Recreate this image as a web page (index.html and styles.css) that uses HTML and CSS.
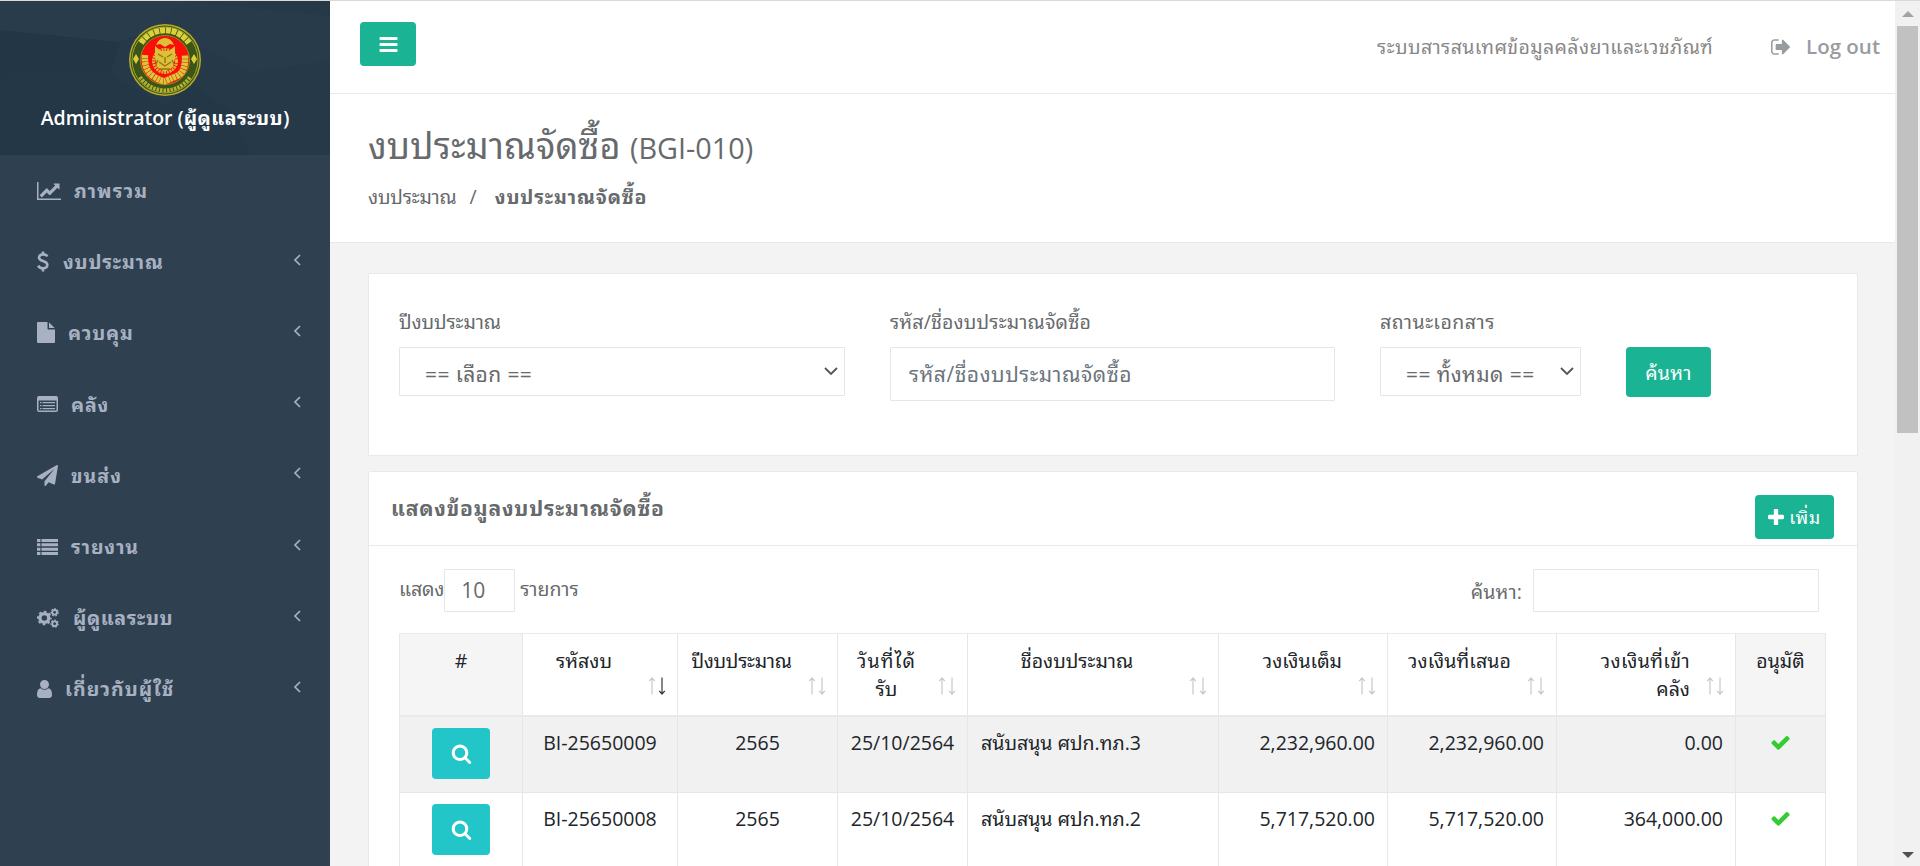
FILE: index.html
```html
<!DOCTYPE html>
<html lang="th">
<head>
<meta charset="utf-8">
<title>งบประมาณจัดซื้อ</title>
<link rel="stylesheet" href="styles.css">
</head>
<body>
<svg class="defs" width="0" height="0">
  <symbol id="i-bars" viewBox="0 0 1792 1792"><path d="M1664 1344v128q0 26-19 45t-45 19h-1408q-26 0-45-19t-19-45v-128q0-26 19-45t45-19h1408q26 0 45 19t19 45zm0-512v128q0 26-19 45t-45 19h-1408q-26 0-45-19t-19-45v-128q0-26 19-45t45-19h1408q26 0 45 19t19 45zm0-512v128q0 26-19 45t-45 19h-1408q-26 0-45-19t-19-45v-128q0-26 19-45t45-19h1408q26 0 45 19t19 45z"/></symbol>
  <symbol id="i-search" viewBox="0 0 1792 1792"><path d="M1216 832q0-185-131.5-316.5t-316.5-131.5-316.5 131.5-131.5 316.5 131.5 316.5 316.5 131.5 316.5-131.5 131.5-316.5zm512 832q0 52-38 90t-90 38q-54 0-90-38l-343-342q-179 124-399 124-143 0-273.5-55.5t-225-150-150-225-55.5-273.5 55.5-273.5 150-225 225-150 273.5-55.5 273.5 55.5 225 150 150 225 55.5 273.5q0 220-124 399l343 343q37 37 37 90z"/></symbol>
  <symbol id="i-check" viewBox="0 0 1792 1792"><path d="M1671 566q0 40-28 68l-724 724-136 136q-28 28-68 28t-68-28l-136-136-362-362q-28-28-28-68t28-68l136-136q28-28 68-28t68 28l294 295 656-657q28-28 68-28t68 28l136 136q28 28 28 68z"/></symbol>
  <symbol id="i-sort" viewBox="0 0 18 18"><path class="sort-up" d="M4 17.500V1M1.200 4.200L4 1l2.800 3.200"/><path class="sort-down" d="M14 .5V17M11.200 13.800L14 17l2.800-3.200"/></symbol>
  <symbol id="i-angle" viewBox="0 0 8 12"><path d="M7 1L2 6l5 5" fill="none" stroke="currentColor" stroke-width="1.700"/></symbol>
</svg>
<div class="topline"></div>
<div class="app">
  <aside class="sidebar">
    <div class="profile">
      <svg class="facets" viewBox="0 0 330 154" preserveAspectRatio="none">
        <rect width="330" height="154" fill="#263949"/>
        <path d="M0 29L120 41L110 73L17 69L0 85Z" fill="#233646"/>
        <path d="M0 0H185L160 24L120 41L0 29Z" fill="#283c4b"/>
        <path d="M17 69L110 73L165 105L60 154H0V85Z" fill="#243747"/>
        <path d="M190 80L230 110L250 154H60L165 105Z" fill="#243747"/>
        <path d="M330 15V60L250 71L160 24L185 0Z" fill="#273b4a"/>
      </svg>
      <svg class="emblem" viewBox="0 0 72 72">
        <circle cx="36" cy="36" r="36" fill="#b5ad27"/><circle cx="36" cy="36" r="34.500" fill="#3b5518"/>
        <circle cx="36" cy="36" r="33" fill="none" stroke="#a8a329" stroke-width="1"/>
        <path d="M12 19A29 29 0 0 1 60 19" fill="none" stroke="#ddd13a" stroke-width="6" stroke-dasharray="5 .8"/>
        <path d="M11 53A30 30 0 0 0 61 53" fill="none" stroke="#b8b030" stroke-width="4" stroke-dasharray="2.500 1"/>
        <circle cx="36" cy="36" r="24.500" fill="#fb0d08" stroke="#948f22" stroke-width="1"/>
        <path d="M7 30l3 5-3 5-3-5zM65 30l3 5-3 5-3-5z" fill="#d9ce3a"/>
        <path d="M16 31Q15 46 24 52T36 57T48 52T56 31" fill="none" stroke="#d6c83a" stroke-width="6.500" stroke-dasharray="3 .5"/>
        <path d="M27 21Q30 14 36 14T45 21L41 20L36 23L31 20Z" fill="#dcc038"/>
        <circle cx="36" cy="37" r="11.500" fill="none" stroke="#d8b834" stroke-width="3" stroke-dasharray="2 .8"/>
        <path d="M26 22L32 27H40L46 22L46 34L44 43L36 48L28 43L26 34Z" fill="#dcc038"/>
        <path d="M29 30l5 3m9-3l-5 3M30 38l6 4 6-4M36 33v6M31 45h10M29 36l-2 4M43 36l2 4" fill="none" stroke="#94701a" stroke-width="1.400"/>
      </svg>
      <div class="who"><span>Administrator (<span class="t-admin">ผู้ดูแลระบบ</span>)</span></div>
    </div>
    <nav class="menu">
      <a class="item"><svg class="ic ic-chart" viewBox="0 128 2048 1536"><path d="M2048 1536v128h-2048v-1536h128v1408h1920zm-128-1248v435q0 21-19.500 29.500t-35.500-7.500l-121-121-633 633q-10 10-23 10t-23-10l-233-233-416 416-192-192 585-585q10-10 23-10t23 10l233 233 464-464-121-121q-16-16-7.500-35.500t29.500-19.500h435q14 0 23 9t9 23z"/></svg><span class="t-m1">ภาพรวม</span></a>
      <a class="item"><svg class="ic ic-dollar" viewBox="0 0 12 21"><path d="M10.300 5.600C9.600 4 8 3.400 6 3.400c-2.300 0-4 1.100-4 3 0 4.500 8.300 2.600 8.300 7.400 0 2.200-1.800 3.500-4.300 3.500-2.200 0-4-.9-4.800-2.700M6 .5v3M6 17v3.500" fill="none" stroke="currentColor" stroke-width="2.600"/></svg><span class="t-m2">งบประมาณ</span><svg class="angle"><use href="#i-angle"/></svg></a>
      <a class="item"><svg class="ic ic-file" viewBox="128 0 1536 1792"><path d="M1152 512v-472q22 14 36 28l408 408q14 14 28 36h-472zm-128 32q0 40 28 68t68 28h544v1056q0 40-28 68t-68 28h-1344q-40 0-68-28t-28-68v-1600q0-40 28-68t68-28h800v544z"/></svg><span class="t-m3">ควบคุม</span><svg class="angle"><use href="#i-angle"/></svg></a>
      <a class="item"><svg class="ic ic-listalt" viewBox="0 0 21 16"><path fill-rule="evenodd" d="M2 0H19Q21 0 21 2V14Q21 16 19 16H2Q0 16 0 14V2Q0 0 2 0ZM1.500 4.500V14Q1.500 14.600 2 14.600H19Q19.500 14.600 19.500 14V4.500Z"/><path d="M3 6h1.500v1.200H3zm2.500 0H18v1.200H5.500zM3 9h1.500v1.200H3zm2.500 0H18v1.200H5.500zM3 12h1.500v1.200H3zm2.500 0H18v1.200H5.500z"/></svg><span class="t-m4">คลัง</span><svg class="angle"><use href="#i-angle"/></svg></a>
      <a class="item"><svg class="ic ic-plane" viewBox="0 0 1792 1792"><path d="M1764 11q33 24 27 64l-256 1536q-5 29-32 45-14 8-31 8-11 0-24-5l-453-185-242 295q-18 23-49 23-13 0-22-4-19-7-30.500-23.500t-11.500-36.500v-349l864-1059-1069 925-395-162q-37-14-40-55-2-40 32-59l1664-960q15-9 32-9 20 0 36 11z"/></svg><span class="t-m5">ขนส่ง</span><svg class="angle"><use href="#i-angle"/></svg></a>
      <a class="item"><svg class="ic ic-list" viewBox="0 0 21 16"><path d="M0 0h3.400v3H0zm4.500 0H21v3H4.500zM0 4.300h3.400v3H0zm4.500 0H21v3H4.500zM0 8.700h3.400v3H0zm4.500 0H21v3H4.500zM0 13h3.400v3H0zm4.500 0H21v3H4.500z"/></svg><span class="t-m6">รายงาน</span><svg class="angle"><use href="#i-angle"/></svg></a>
      <a class="item"><svg class="ic ic-cogs" viewBox="0 0 22.500 20" fill="none" stroke="currentColor"><circle cx="7.500" cy="10" r="4.500" stroke-width="3.400"/><circle cx="7.500" cy="10" r="6.600" stroke-width="1.800" stroke-dasharray="2.700 2.480" stroke-dashoffset="1.300"/><circle cx="18" cy="4.200" r="2.400" stroke-width="1.900"/><circle cx="18" cy="4.200" r="3.700" stroke-width="1.200" stroke-dasharray="1.700 1.620"/><circle cx="18" cy="15.800" r="2.400" stroke-width="1.900"/><circle cx="18" cy="15.800" r="3.700" stroke-width="1.200" stroke-dasharray="1.700 1.620"/></svg><span class="t-m7">ผู้ดูแลระบบ</span><svg class="angle"><use href="#i-angle"/></svg></a>
      <a class="item"><svg class="ic ic-user" viewBox="256 128 1280 1536"><path d="M1536 1399q0 109-62.500 187t-150.500 78h-854q-88 0-150.500-78t-62.500-187q0-85 8.500-160.500t31.500-152 58.500-131 94-89 134.500-34.500q131 128 313 128t313-128q76 0 134.500 34.500t94 89 58.500 131 31.500 152 8.500 160.500zm-256-887q0 159-112.500 271.500t-271.500 112.500-271.500-112.500-112.500-271.500 112.500-271.500 271.500-112.500 271.500 112.500 112.500 271.500z"/></svg><span class="t-m8">เกี่ยวกับผู้ใช้</span><svg class="angle"><use href="#i-angle"/></svg></a>
    </nav>
  </aside>
  <main class="page">
    <header class="topbar">
      <button class="btn toggle"><svg><use href="#i-bars"/></svg></button>
      <div class="top-right">
        <span class="t-system">ระบบสารสนเทศข้อมูลคลังยาและเวชภัณฑ์</span>
        <a class="logout"><svg viewBox="64 256 1568 1280"><path d="M704 1440q0 4 1 20t.5 26.500-3 23.500-10 19.500-20.500 6.500h-320q-119 0-203.500-84.500t-84.500-203.500v-704q0-119 84.500-203.500t203.500-84.500h320q13 0 22.500 9.500t9.500 22.500q0 4 1 20t.5 26.500-3 23.500-10 19.500-20.500 6.500h-320q-66 0-113 47t-47 113v704q0 66 47 113t113 47h312l11.500 1 11.500 3 8 5.500 7 9 2 13.500zm928-544q0 26-19 45l-544 544q-19 19-45 19t-45-19-19-45v-288h-448q-26 0-45-19t-19-45v-384q0-26 19-45t45-19h448v-288q0-26 19-45t45-19 45 19l544 544q19 19 19 45z"/></svg><span>Log out</span></a>
      </div>
    </header>
    <section class="heading">
      <h2><span class="t-title">งบประมาณจัดซื้อ</span> <small>(BGI-010)</small></h2>
      <div class="crumbs"><span class="t-c1">งบประมาณ</span><span class="slash">/</span><strong class="t-c2">งบประมาณจัดซื้อ</strong></div>
    </section>
    <div class="content">
      <section class="card filter">
        <div class="field f-year"><label><span class="t-l1">ปีงบประมาณ</span></label><div class="select"><span class="t-s1">== เลือก ==</span><svg viewBox="0 0 14 9"><path d="M1 1l6 6 6-6"/></svg></div></div>
        <div class="field f-name"><label><span class="t-l2">รหัส/ชื่องบประมาณจัดซื้อ</span></label><div class="input"><span class="t-s2">รหัส/ชื่องบประมาณจัดซื้อ</span></div></div>
        <div class="field f-status"><label><span class="t-l3">สถานะเอกสาร</span></label><div class="select"><span class="t-s3">== ทั้งหมด ==</span><svg viewBox="0 0 14 9"><path d="M1 1l6 6 6-6"/></svg></div></div>
        <button class="btn find"><span class="t-find">ค้นหา</span></button>
      </section>
      <section class="card list">
        <div class="list-head"><h5><span class="t-list">แสดงข้อมูลงบประมาณจัดซื้อ</span></h5><button class="btn add"><svg viewBox="192 128 1408 1408"><path d="M1600 736v192q0 40-28 68t-68 28h-416v416q0 40-28 68t-68 28h-192q-40 0-68-28t-28-68v-416h-416q-40 0-68-28t-28-68v-192q0-40 28-68t68-28h416v-416q0-40 28-68t68-28h192q40 0 68 28t28 68v416h416q40 0 68 28t28 68z"/></svg><span class="t-add">เพิ่ม</span></button></div>
        <div class="tools">
          <div class="length"><span class="t-show">แสดง</span><div class="num">10</div><span class="t-items">รายการ</span></div>
          <div class="search"><span class="t-search">ค้นหา:</span><div class="box"></div></div>
        </div>
        <table>
          <colgroup><col class="c1"><col class="c2"><col class="c3"><col class="c4"><col class="c5"><col class="c6"><col class="c7"><col class="c8"><col class="c9"></colgroup>
          <thead><tr>
            <th class="plain">#</th>
            <th><span class="t-h2">รหัสงบ</span><svg class="sort desc"><use href="#i-sort"/></svg></th>
            <th><span class="t-h3">ปีงบประมาณ</span><svg class="sort"><use href="#i-sort"/></svg></th>
            <th><span class="t-h4">วันที่ได้</span><br><span class="t-h4b">รับ</span><svg class="sort"><use href="#i-sort"/></svg></th>
            <th><span class="t-h5">ชื่องบประมาณ</span><svg class="sort"><use href="#i-sort"/></svg></th>
            <th class="right"><span class="t-h6">วงเงินเต็ม</span><svg class="sort"><use href="#i-sort"/></svg></th>
            <th class="right"><span class="t-h7">วงเงินที่เสนอ</span><svg class="sort"><use href="#i-sort"/></svg></th>
            <th class="right"><span class="t-h8">วงเงินที่เข้า</span><br><span class="t-h8b">คลัง</span><svg class="sort"><use href="#i-sort"/></svg></th>
            <th class="plain"><span class="t-h9">อนุมัติ</span></th>
          </tr></thead>
          <tbody>
            <tr class="odd"><td><button class="btn view"><svg><use href="#i-search"/></svg></button></td><td>BI-25650009</td><td>2565</td><td>25/10/2564</td><td class="left"><span class="t-r">สนับสนุน ศปก.ทภ.3</span></td><td class="right">2,232,960.00</td><td class="right">2,232,960.00</td><td class="right">0.00</td><td><svg class="ok"><use href="#i-check"/></svg></td></tr>
            <tr><td><button class="btn view"><svg><use href="#i-search"/></svg></button></td><td>BI-25650008</td><td>2565</td><td>25/10/2564</td><td class="left"><span class="t-r">สนับสนุน ศปก.ทภ.2</span></td><td class="right">5,717,520.00</td><td class="right">5,717,520.00</td><td class="right">364,000.00</td><td><svg class="ok"><use href="#i-check"/></svg></td></tr>
          </tbody>
        </table>
      </section>
    </div>
  </main>
  <div class="scrollbar"><svg class="up" viewBox="0 0 12 6"><path d="M0 6L6 0l6 6z"/></svg><div class="thumb"></div><svg class="down" viewBox="0 0 12 6"><path d="M0 0h12L6 6z"/></svg></div>
</div>
</body>
</html>
```
FILE: styles.css
```css
* { box-sizing: border-box; }
html, body { margin: 0; height: 866px; overflow: hidden; }
body { font: 19.5px/29px "Open Sans", Tahoma, "Noto Sans Thai Looped", Loma, Waree, "Noto Sans Thai", sans-serif; color: #676a6c; background: #f3f3f4; }
span { white-space: nowrap; }
svg { fill: currentColor; display: block; flex: none; }
.defs { position: absolute; }
.topline { height: 1px; background: #d9d9d9; }
.app { display: grid; grid-template-columns: 330px 1565px 25px; height: 865px; overflow: hidden; }

.sidebar { background: #2f4050; color: #a7b1c2; font-weight: 600; }
.profile { height: 154px; position: relative; display: flex; flex-direction: column; align-items: center; padding-top: 23px; overflow: hidden; }
.facets { position: absolute; left: 0; top: 0; width: 330px; height: 154px; }
.emblem { position: relative; width: 72px; height: 72px; }
.who { position: relative; color: #fff; margin-top: 7px; }
.item { display: flex; align-items: center; height: 71.2px; padding: 0 29px 0 37px; font-weight: 700; letter-spacing: .8px; }
.ic-chart { width: 24px; height: 18px; margin-right: 13px; }
.ic-dollar { width: 12px; height: 21px; margin-right: 14px; }
.ic-file { width: 18px; height: 21px; margin-right: 13px; }
.ic-listalt { width: 21px; height: 16px; margin-right: 13px; }
.ic-plane { width: 21px; height: 21px; margin-right: 13px; }
.ic-list { width: 21px; height: 16px; margin-right: 13px; }
.ic-cogs { width: 22px; height: 20px; margin-right: 14px; fill: none; }
.ic-user { width: 15px; height: 18px; margin-right: 13px; }
.angle { width: 8px; height: 12px; margin: 0 0 4px auto; }

/* Thai runs: tracking per label */
.t-admin { font-weight: 700; letter-spacing: .5px; }
.t-m1, .t-m5, .t-m8 { letter-spacing: 1px; }
.t-m7 { letter-spacing: .6px; }
.t-system { letter-spacing: .38px; }
.t-title { letter-spacing: .18px; }
.t-c1 { letter-spacing: -.2px; }
.t-c2 { letter-spacing: .85px; }
.t-l1 { letter-spacing: -.1px; }
.t-l2 { letter-spacing: .15px; }
.t-l3 { letter-spacing: .5px; }
.t-s1, .t-s3 { letter-spacing: .4px; }
.t-s2 { letter-spacing: .53px; }
.t-find { letter-spacing: .2px; }
.t-show { letter-spacing: -.2px; }
.t-search { letter-spacing: .1px; }
.t-h3 { letter-spacing: -.3px; }
.t-h4 { letter-spacing: 1.1px; }
.t-h7 { letter-spacing: .1px; }
.t-h8 { letter-spacing: .35px; }
.t-list { letter-spacing: .8px; }

.page { background: #f3f3f4; overflow: hidden; }
.btn { border: 0; border-radius: 4px; background: #1ab394; color: #fff; font: inherit; padding: 0; display: flex; align-items: center; justify-content: center; flex: none; }
.topbar { height: 93px; background: #fff; border-bottom: 1px solid #e7eaec; display: flex; justify-content: space-between; padding: 21px 15px 0 30px; }
.toggle { width: 56px; height: 44px; }
.toggle svg { width: 21px; height: 21px; }
.top-right { display: flex; align-items: flex-start; color: #888888; padding-top: 10px; }
.logout { display: flex; align-items: center; color: #999c9e; font-size: 20.5px; font-weight: 600; margin-left: 58px; }
.logout svg { width: 19px; height: 16px; margin-right: 16px; }
.heading { height: 149px; background: #fff; border-bottom: 1px solid #e7eaec; padding: 30px 38px 0; }
h2 { margin: 0; font-size: 36px; line-height: 43px; height: 43px; font-weight: 400; }
h2 small { font-size: 28.8px; line-height: 1; font-weight: 400; }
.crumbs { margin-top: 15px; display: flex; }
.slash { margin: 0 18px 0 13px; }
.content { padding: 30px 37px 0 38px; }
.card { background: #fff; border: 1px solid #e7eaec; }
.filter { height: 183px; display: flex; padding: 33px 30px 0; }
.field label { display: block; height: 40px; }
.f-year { width: 446px; margin-right: 45px; }
.f-name { width: 445px; margin-right: 45px; }
.f-status { width: 201px; margin-right: 45px; }
.select, .input, .num, .box { border: 1px solid #e5e6e7; border-radius: 1px; background: #fff; }
.select { height: 49px; font-size: 21px; display: flex; align-items: center; justify-content: space-between; padding: 5px 6px 0 25px; }
.select svg { width: 14px; height: 9px; fill: none; stroke: #555; stroke-width: 1.8; margin-bottom: 5px; }
.input { height: 54px; font-size: 21px; padding: 12px 18px 0; color: #6c757d; }
.find { width: 85px; height: 50px; margin-top: 40px; }
.list { margin-top: 15px; height: 500px; border-radius: 3px 3px 0 0; }
.list-head { height: 74px; border-bottom: 1px solid #e7eaec; display: flex; justify-content: space-between; padding: 23px 23px 0 22px; }
h5 { margin: -1px 0 0; font-size: 21px; font-weight: 700; }
.add { width: 79px; height: 44px; font-size: 18px; }
.add svg { width: 16px; height: 16px; margin-right: 5px; }
.t-add { letter-spacing: .5px; }
.tools { display: flex; justify-content: space-between; padding: 23px 38px 0 30px; height: 87px; }
.length { display: flex; }
.length span { padding-top: 5px; }
.num { width: 71px; height: 43px; font-size: 21px; padding: 6px 0 0 16px; margin-right: 5px; }
.search { display: flex; }
.search span { padding-top: 8px; }
.box { width: 286px; height: 43px; margin-left: 11px; }

table { margin-left: 30px; width: 1427px; table-layout: fixed; border-collapse: separate; border-spacing: 0; border: 1px solid #e7eaec; border-right: 0; color: #212529; }
.c1 { width: 123px; } .c2 { width: 155px; } .c3 { width: 160px; } .c4 { width: 130px; } .c5 { width: 251px; } .c6 { width: 169px; } .c7 { width: 169px; } .c8 { width: 179px; } .c9 { width: 90px; }
th, td { border-right: 1px solid #e7e7e7; padding: 0; vertical-align: top; text-align: center; font-weight: 400; }
th { position: relative; height: 83px; padding: 13px 32px 0 0; line-height: 28px; border-bottom: 2px solid #e7eaec; }
.plain { background: #f5f5f6; padding-right: 0; }
th.right { padding-right: 45px; }
td { height: 76px; padding-top: 11px; border-bottom: 1px solid #e7e7e7; }
.right { text-align: right; }
td.right { padding-right: 12px; }
td.left { text-align: left; padding-left: 13px; }
.odd { background: #f1f1f2; }
.view { width: 58px; height: 51px; background: #23c6c8; margin: 0 auto; }
.view svg { width: 21px; height: 21px; }
.ok { width: 21px; height: 21px; color: #32cd32; margin: 4px auto 0; }
.sort { position: absolute; right: 11px; bottom: 20px; width: 18px; height: 18px; fill: none; stroke: #c8c8ca; stroke-width: 1.2; }
.sort.desc { --down: #33363f; }
.sort-down { stroke: var(--down, #c8c8ca); }

.scrollbar { background: #f1f1f1; display: flex; flex-direction: column; align-items: center; padding: 10px 2px 8px; }
.scrollbar svg { width: 12px; height: 6px; }
.up { color: #a3a3a3; }
.down { color: #505050; margin-top: auto; }
.thumb { width: 21px; height: 407px; margin-top: 9px; background: #c1c1c1; }
```
